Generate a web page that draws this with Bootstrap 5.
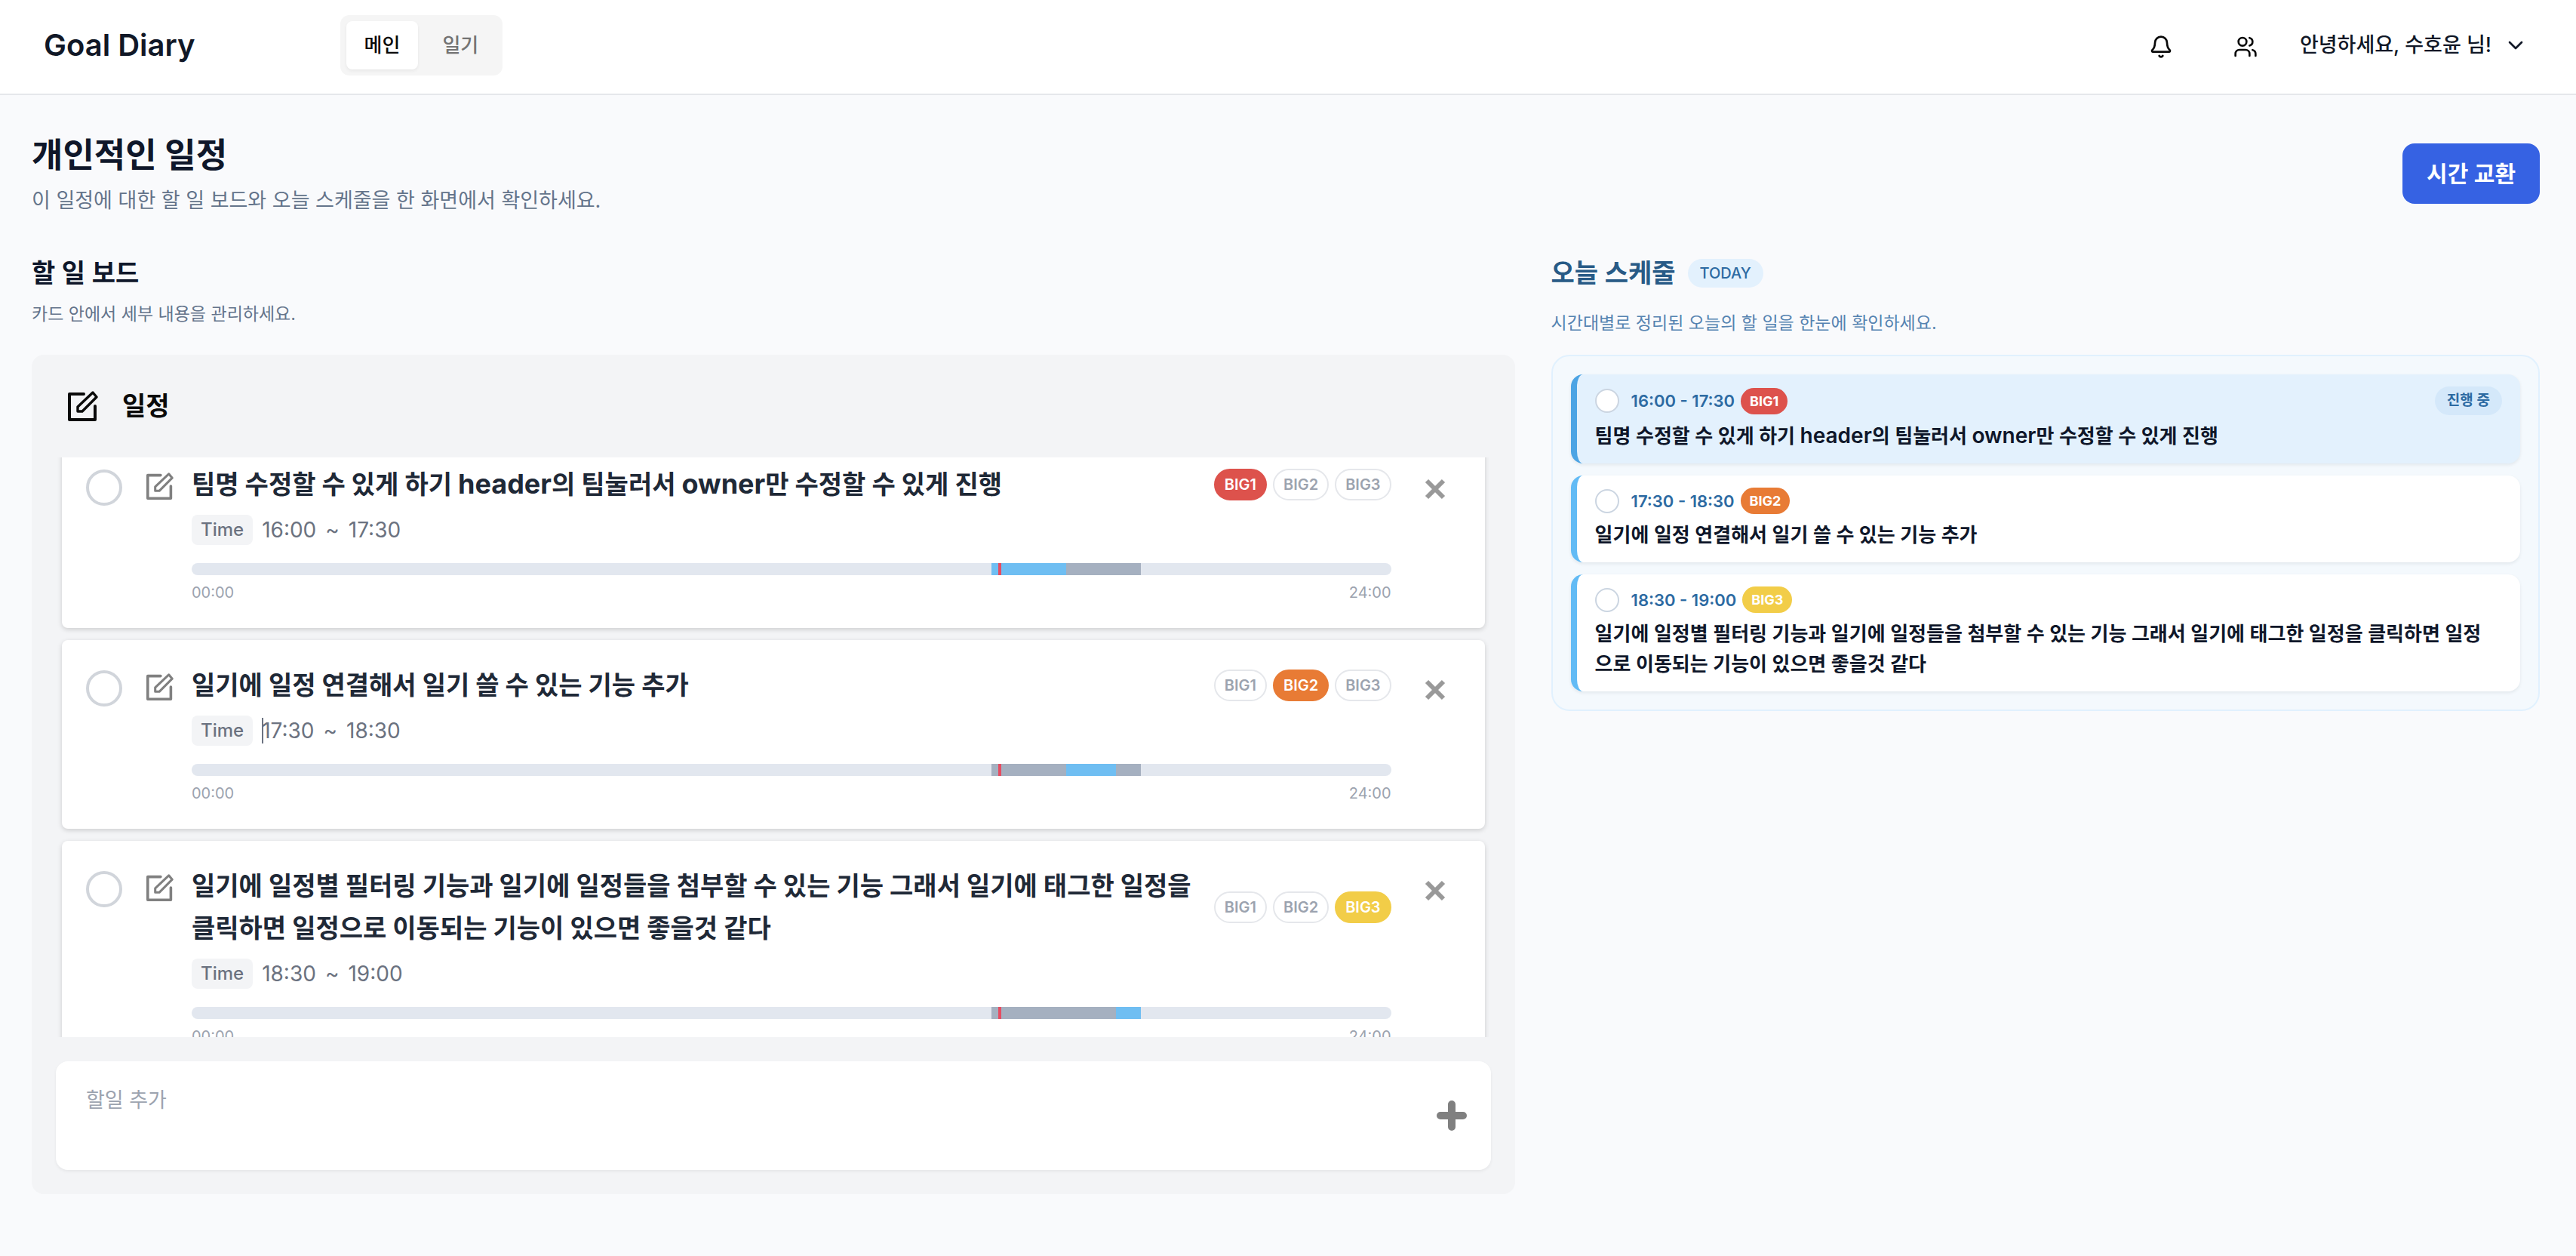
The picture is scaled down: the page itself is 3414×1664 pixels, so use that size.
<!DOCTYPE html>
<html lang="ko">
<head>
<meta charset="utf-8">
<meta name="viewport" content="width=device-width, initial-scale=1">
<title>Goal Diary</title>
<link href="https://cdn.jsdelivr.net/npm/bootstrap@5.3.0/dist/css/bootstrap.min.css" rel="stylesheet">
<style>
  body { background: #f9fafc; color: #0f172a; font-family: Inter, "Noto Sans CJK KR", sans-serif; font-size: 26px; line-height: 40px; }
  button { font-family: inherit; }
  .btn-bare { background: none; border: 0; padding: 0; color: inherit; }

  .site-header { background: #fff; border-bottom: 2px solid #e5e7eb; padding: 20px 64px 24px 58px; }
  .brand { font-size: 40px; line-height: 56px; font-weight: 600; color: #111827; text-decoration: none; }
  .tab-group { background: #f5f5f5; border-radius: 12px; padding: 8px; margin-left: 192px; gap: 8px; }
  .tab-item { border: 0; border-radius: 8px; background: none; color: #737373; padding: 12px 24px; font-size: 26px; line-height: 40px; font-weight: 500; }
  .tab-item.active { background: #fff; color: #0a0a0a; box-shadow: 0 2px 4px rgba(0,0,0,.06); }
  .header-tools { gap: 32px; }
  .icon-button { width: 80px; height: 80px; color: #0a0a0a; }
  .user-menu { font-size: 27px; font-weight: 500; color: #111827; }

  .page-main { padding: 48px 48px 82px 42px; }
  .page-title { font-size: 45px; line-height: 64px; font-weight: 700; margin: 0; }
  .page-note { font-size: 27px; line-height: 40px; color: #64748b; margin: 0; }
  .btn-swap { background: #3662e3; color: #fff; font-size: 30px; line-height: 48px; font-weight: 600; padding: 16px 32px; border: 0; border-radius: 16px; }
  .btn-swap:hover { background: #2f55c8; color: #fff; }

  .columns { gap: 48px; margin-top: 48px; }
  .board-col { flex: 3 1 0; min-width: 0; }
  .today-col { flex: 2 1 0; min-width: 0; }
  .section-title { font-size: 34px; line-height: 56px; font-weight: 600; margin: 0; }
  .section-note { font-size: 23px; line-height: 36px; color: #64748b; margin: 8px 0 36px; }
  .today-col .section-title { color: #285a86; }
  .today-col .section-note { color: #5583b1; margin: 20px 0 24px; }

  .board { background: #f3f4f6; border-radius: 16px; padding: 0 32px 32px; }
  .board-head { height: 136px; padding-left: 16px; gap: 32px; color: #0a0a0a; }
  .board-head h3 { font-size: 34px; line-height: 56px; font-weight: 700; margin: 0; }
  .todo-view { height: 768px; overflow: hidden; padding: 0 8px; }
  .todo-list { margin: -24px 0 0; gap: 16px; }
  .todo { background: #fff; border-radius: 8px; padding: 32px; box-shadow: 0 2px 6px rgba(0,0,0,.16); }
  .round-check { appearance: none; flex: none; width: 48px; height: 48px; border: 4px solid #d1d5db; border-radius: 50%; background: #fff; margin: 8px 32px 0 0; }
  .round-check:checked { background: #62bbf5; }
  .edit-button { flex: none; color: #808080; width: 36px; height: 36px; line-height: 0; margin: 12px 24px 0 0; }
  .todo-body { min-width: 0; }
  .todo-title { font-size: 34px; line-height: 56px; font-weight: 700; color: #1f2937; margin: 0; }
  .todo-title [lang=en] { font-size: 36px; line-height: 1; }
  .rank { border: 2px solid #e5e7eb; border-radius: 24px; background: #fff; color: #9ca3af; font-size: 20px; line-height: 30px; font-weight: 600; padding: 4px 12px; }
  .rank-1 { background: #dd524c; border-color: #dd524c; color: #fff; }
  .rank-2 { background: #e87b35; border-color: #e87b35; color: #fff; }
  .rank-3 { background: #f2cd48; border-color: #f2cd48; color: #fff; }
  .time-row { margin-top: 12px; gap: 12px; color: #6b7280; font-size: 28px; line-height: 40px; }
  .time-chip { background: #f3f4f6; border-radius: 8px; padding: 0 12px; font-size: 24px; font-weight: 500; }
  .time-range { gap: 12px; }
  .caret-line { left: 0; top: 3px; width: 2px; height: 34px; background: #6b7280; }
  .day-bar { height: 16px; border-radius: 8px; background: #e2e7ef; margin-top: 24px; }
  .seg-other { background: #a5b0c0; }
  .seg-own { background: #6fbef2; }
  .now-line { top: 0; bottom: 0; width: 4px; background: #e54d62; }
  .bar-scale { font-size: 20px; line-height: 30px; color: #9ca3af; margin-top: 8px; }
  .remove-button { flex: none; line-height: 0; color: #999; width: 28px; height: 28px; margin: 20px 20px 0 44px; }

  .add-box { background: #fff; border-radius: 16px; margin-top: 32px; padding: 32px 32px 32px 40px; box-shadow: 0 2px 4px rgba(0,0,0,.06); }
  .add-input { border: 0; outline: 0; resize: none; height: 80px; padding: 0; background: none; font-size: 27px; line-height: 40px; }
  .add-input::placeholder { color: #9ca3af; }
  .add-button { color: #808080; line-height: 0; }

  .today-tag { background: #e3f1fd; color: #2c6aa2; border-radius: 20px; padding: 4px 16px; font-size: 20px; line-height: 30px; font-weight: 500; }
  .today-panel { background: #f4f9fd; border: 2px solid #e1f1fe; border-radius: 24px; padding: 24px; gap: 16px; }
  .slot { background: #fff; border-left: 8px solid #62bbf5; border-radius: 16px; padding: 16px 24px; box-shadow: 0 2px 4px rgba(15,23,42,.08); }
  .slot-now { background: #e3f1fd; border-left-color: #4ca4e4; }
  .slot-check { appearance: none; flex: none; width: 32px; height: 32px; border: 2px solid #cbd5e1; border-radius: 50%; background: #fff; margin: 0 16px 0 0; }
  .slot-check:checked { background: #62bbf5; }
  .slot-time { font-size: 22px; line-height: 32px; font-weight: 600; color: #2c6aa2; margin-right: 8px; }
  .slot-rank { border: 0; font-size: 18px; line-height: 27px; font-weight: 700; }
  .slot-state { background: #d4e8fa; color: #2c6aa2; border-radius: 20px; padding: 4px 16px; font-size: 19px; line-height: 30px; font-weight: 600; }
  .slot-title { font-size: 26px; line-height: 40px; font-weight: 600; margin: 8px 0 0; padding-right: 12px; }
  .slot-title [lang=en] { font-size: 28px; line-height: 1; }
</style>
</head>
<body>
<svg class="d-none" aria-hidden="true">
  <symbol id="i-edit" viewBox="0 0 40 40"><path d="M21 4H2V38H36V20" fill="none" stroke="currentColor" stroke-width="4" stroke-linejoin="round" stroke-linecap="round"/><path d="M13 27V21L33 2L38 8L19 27Z" fill="none" stroke="currentColor" stroke-width="3.4" stroke-linejoin="round"/></symbol>
  <symbol id="i-x" viewBox="0 0 28 28"><path d="M3 3L25 25M25 3L3 25" stroke="currentColor" stroke-width="6"/></symbol>
</svg>

<header class="site-header d-flex align-items-center">
  <a class="brand" href="#">Goal Diary</a>
  <nav class="tab-group d-flex" aria-label="메뉴">
    <button class="tab-item active" type="button">메인</button>
    <button class="tab-item" type="button">일기</button>
  </nav>
  <div class="header-tools d-flex align-items-center ms-auto">
    <button class="btn-bare icon-button" type="button" aria-label="알림">
      <svg width="32" height="32" viewBox="0 0 24 24" fill="none" stroke="currentColor" stroke-width="2" stroke-linecap="round" stroke-linejoin="round"><path d="M10.268 21a2 2 0 0 0 3.464 0"/><path d="M3.262 15.326A1 1 0 0 0 4 17h16a1 1 0 0 0 .74-1.673C19.41 13.956 18 12.499 18 8A6 6 0 0 0 6 8c0 4.499-1.411 5.956-2.738 7.326"/></svg>
    </button>
    <button class="btn-bare icon-button" type="button" aria-label="팀">
      <svg width="32" height="32" viewBox="0 0 24 24" fill="none" stroke="currentColor" stroke-width="2" stroke-linecap="round" stroke-linejoin="round"><path d="M16 21v-2a4 4 0 0 0-4-4H6a4 4 0 0 0-4 4v2"/><path d="M16 3.128a4 4 0 0 1 0 7.744"/><path d="M22 21v-2a4 4 0 0 0-3-3.87"/><circle cx="9" cy="7" r="4"/></svg>
    </button>
    <button class="btn-bare user-menu d-flex align-items-center gap-3" type="button">안녕하세요, 수호윤 님!
      <svg width="32" height="32" viewBox="0 0 24 24" fill="none" stroke="currentColor" stroke-width="2" stroke-linecap="round" stroke-linejoin="round"><path d="m6 9 6 6 6-6"/></svg>
    </button>
  </div>
</header>

<main class="page-main">
  <div class="d-flex justify-content-between align-items-center">
    <div class="d-flex flex-column gap-2">
      <h1 class="page-title">개인적인 일정</h1>
      <p class="page-note">이 일정에 대한 할 일 보드와 오늘 스케줄을 한 화면에서 확인하세요.</p>
    </div>
    <button class="btn btn-swap" type="button">시간 교환</button>
  </div>

  <div class="columns d-flex align-items-start">
    <section class="board-col">
      <h2 class="section-title">할 일 보드</h2>
      <p class="section-note">카드 안에서 세부 내용을 관리하세요.</p>
      <div class="board">
        <div class="board-head d-flex align-items-center">
          <svg width="40" height="40"><use href="#i-edit"/></svg>
          <h3>일정</h3>
        </div>
        <div class="todo-view">
          <ul class="todo-list list-unstyled d-flex flex-column">
            <li class="todo d-flex align-items-start">
              <input class="round-check" type="checkbox" aria-label="완료">
              <button class="btn-bare edit-button" type="button" aria-label="수정"><svg width="36" height="36"><use href="#i-edit"/></svg></button>
              <div class="todo-body flex-grow-1">
                <div class="d-flex align-items-center gap-3">
                  <h4 class="todo-title flex-grow-1">팀명 수정할 수 있게 하기 <span lang="en">header</span>의 팀눌러서 <span lang="en">owner</span>만 수정할 수 있게 진행</h4>
                  <div class="d-flex gap-2"><button class="rank rank-1" type="button">BIG1</button><button class="rank" type="button">BIG2</button><button class="rank" type="button">BIG3</button></div>
                </div>
                <div class="time-row d-flex"><span class="time-chip">Time</span><div class="time-range d-flex"><span>16:00</span><span>~</span><span>17:30</span></div></div>
                <div class="day-bar d-flex position-relative overflow-hidden">
                  <div style="width:66.667%"></div><div class="seg-own" style="width:6.25%"></div><div class="seg-other" style="width:6.25%"></div>
                  <div class="now-line position-absolute" style="left:67.25%"></div>
                </div>
                <div class="bar-scale d-flex justify-content-between"><span>00:00</span><span>24:00</span></div>
              </div>
              <button class="btn-bare remove-button" type="button" aria-label="삭제"><svg width="28" height="28"><use href="#i-x"/></svg></button>
            </li>
            <li class="todo d-flex align-items-start">
              <input class="round-check" type="checkbox" aria-label="완료">
              <button class="btn-bare edit-button" type="button" aria-label="수정"><svg width="36" height="36"><use href="#i-edit"/></svg></button>
              <div class="todo-body flex-grow-1">
                <div class="d-flex align-items-center gap-3">
                  <h4 class="todo-title flex-grow-1">일기에 일정 연결해서 일기 쓸 수 있는 기능 추가</h4>
                  <div class="d-flex gap-2"><button class="rank" type="button">BIG1</button><button class="rank rank-2" type="button">BIG2</button><button class="rank" type="button">BIG3</button></div>
                </div>
                <div class="time-row d-flex"><span class="time-chip">Time</span><div class="time-range d-flex position-relative"><span>17:30</span><span>~</span><span>18:30</span><i class="caret-line position-absolute"></i></div></div>
                <div class="day-bar d-flex position-relative overflow-hidden">
                  <div style="width:66.667%"></div><div class="seg-other" style="width:6.25%"></div><div class="seg-own" style="width:4.167%"></div><div class="seg-other" style="width:2.083%"></div>
                  <div class="now-line position-absolute" style="left:67.25%"></div>
                </div>
                <div class="bar-scale d-flex justify-content-between"><span>00:00</span><span>24:00</span></div>
              </div>
              <button class="btn-bare remove-button" type="button" aria-label="삭제"><svg width="28" height="28"><use href="#i-x"/></svg></button>
            </li>
            <li class="todo d-flex align-items-start">
              <input class="round-check" type="checkbox" aria-label="완료">
              <button class="btn-bare edit-button" type="button" aria-label="수정"><svg width="36" height="36"><use href="#i-edit"/></svg></button>
              <div class="todo-body flex-grow-1">
                <div class="d-flex align-items-center gap-3">
                  <h4 class="todo-title flex-grow-1">일기에 일정별 필터링 기능과 일기에 일정들을 첨부할 수 있는 기능 그래서 일기에 태그한 일정을 클릭하면 일정으로 이동되는 기능이 있으면 좋을것 같다</h4>
                  <div class="d-flex gap-2"><button class="rank" type="button">BIG1</button><button class="rank" type="button">BIG2</button><button class="rank rank-3" type="button">BIG3</button></div>
                </div>
                <div class="time-row d-flex"><span class="time-chip">Time</span><div class="time-range d-flex"><span>18:30</span><span>~</span><span>19:00</span></div></div>
                <div class="day-bar d-flex position-relative overflow-hidden">
                  <div style="width:66.667%"></div><div class="seg-other" style="width:10.417%"></div><div class="seg-own" style="width:2.083%"></div>
                  <div class="now-line position-absolute" style="left:67.25%"></div>
                </div>
                <div class="bar-scale d-flex justify-content-between"><span>00:00</span><span>24:00</span></div>
              </div>
              <button class="btn-bare remove-button" type="button" aria-label="삭제"><svg width="28" height="28"><use href="#i-x"/></svg></button>
            </li>
          </ul>
        </div>
        <form class="add-box d-flex align-items-center gap-3">
          <textarea class="add-input flex-grow-1" placeholder="할일 추가" aria-label="할일 추가"></textarea>
          <button class="btn-bare add-button" type="button" aria-label="추가"><svg width="40" height="40" viewBox="0 0 40 40"><path d="M20 5V35M5 20H35" stroke="currentColor" stroke-width="10" stroke-linecap="round"/></svg></button>
        </form>
      </div>
    </section>

    <section class="today-col">
      <div class="d-flex align-items-center gap-3">
        <h2 class="section-title">오늘 스케줄</h2><span class="today-tag">TODAY</span>
      </div>
      <p class="section-note">시간대별로 정리된 오늘의 할 일을 한눈에 확인하세요.</p>
      <div class="today-panel d-flex flex-column">
        <article class="slot slot-now">
          <div class="d-flex align-items-center"><input class="slot-check" type="checkbox" aria-label="완료"><span class="slot-time">16:00 - 17:30</span><span class="rank slot-rank rank-1">BIG1</span><span class="slot-state ms-auto">진행 중</span></div>
          <p class="slot-title">팀명 수정할 수 있게 하기 <span lang="en">header</span>의 팀눌러서 <span lang="en">owner</span>만 수정할 수 있게 진행</p>
        </article>
        <article class="slot">
          <div class="d-flex align-items-center"><input class="slot-check" type="checkbox" aria-label="완료"><span class="slot-time">17:30 - 18:30</span><span class="rank slot-rank rank-2">BIG2</span></div>
          <p class="slot-title">일기에 일정 연결해서 일기 쓸 수 있는 기능 추가</p>
        </article>
        <article class="slot">
          <div class="d-flex align-items-center"><input class="slot-check" type="checkbox" aria-label="완료"><span class="slot-time">18:30 - 19:00</span><span class="rank slot-rank rank-3">BIG3</span></div>
          <p class="slot-title">일기에 일정별 필터링 기능과 일기에 일정들을 첨부할 수 있는 기능 그래서 일기에 태그한 일정을 클릭하면 일정으로 이동되는 기능이 있으면 좋을것 같다</p>
        </article>
      </div>
    </section>
  </div>
</main>
<script src="https://cdn.jsdelivr.net/npm/bootstrap@5.3.0/dist/js/bootstrap.bundle.min.js"></script>
</body>
</html>
